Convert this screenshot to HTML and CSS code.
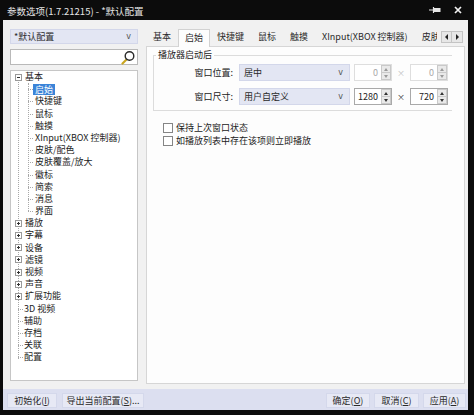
FILE: index.html
```html
<!DOCTYPE html>
<html lang="zh-CN">
<head>
<meta charset="utf-8">
<title>参数选项</title>
<link rel="stylesheet" href="styles.css">
</head>
<body>
<div class="window">
  <div class="titlebar">
    <span class="title">参数选项(1.7.21215) - *默认配置</span>
    <span class="tb-icons">
      <svg class="pin" width="12" height="8" viewBox="0 0 12 8"><path d="M0 4H4.5M4.5 1V7" stroke="#e6e6e6" stroke-width="1.2" fill="none"/><rect x="5" y="2" width="6.5" height="4" fill="#e6e6e6"/></svg>
      <svg class="close" width="8" height="8" viewBox="0 0 8 8"><path d="M1 1L7 7M7 1L1 7" stroke="#f0f0f0" stroke-width="1.7"/></svg>
    </span>
  </div>
  <div class="client">
    <div class="main">
      <div class="left">
        <div class="combo profile"><span>*默认配置</span><span class="arrow">v</span></div>
        <div class="search">
          <svg width="14" height="15" viewBox="0 0 14 15"><path d="M1.5 13.5L5 10" stroke="#c9a51f" stroke-width="2.2" stroke-linecap="round"/><circle cx="8.5" cy="6" r="4.3" stroke="#2a2a2a" stroke-width="1.4" fill="#fff"/></svg>
        </div>
        <div class="tree">
          <div class="row top"><span class="exp"><svg width="7" height="7" viewBox="0 0 7 7"><rect x="0.5" y="0.5" width="6" height="6" fill="#fff" stroke="#9a9a9a"/><path d="M2 3.5H5" stroke="#333"/></svg></span>基本</div>
          <div class="children">
            <div class="row child"><span class="sel">启始</span></div>
            <div class="row child">快捷键</div>
            <div class="row child">鼠标</div>
            <div class="row child">触摸</div>
            <div class="row child">XInput(XBOX 控制器)</div>
            <div class="row child">皮肤/配色</div>
            <div class="row child">皮肤覆盖/放大</div>
            <div class="row child">徽标</div>
            <div class="row child">简索</div>
            <div class="row child">消息</div>
            <div class="row child">界面</div>
          </div>
          <div class="row top"><span class="exp"><svg width="7" height="7" viewBox="0 0 7 7"><rect x="0.5" y="0.5" width="6" height="6" fill="#fff" stroke="#9a9a9a"/><path d="M2 3.5H5M3.5 2V5" stroke="#333"/></svg></span>播放</div>
          <div class="row top"><span class="exp"><svg width="7" height="7" viewBox="0 0 7 7"><rect x="0.5" y="0.5" width="6" height="6" fill="#fff" stroke="#9a9a9a"/><path d="M2 3.5H5M3.5 2V5" stroke="#333"/></svg></span>字幕</div>
          <div class="row top"><span class="exp"><svg width="7" height="7" viewBox="0 0 7 7"><rect x="0.5" y="0.5" width="6" height="6" fill="#fff" stroke="#9a9a9a"/><path d="M2 3.5H5M3.5 2V5" stroke="#333"/></svg></span>设备</div>
          <div class="row top"><span class="exp"><svg width="7" height="7" viewBox="0 0 7 7"><rect x="0.5" y="0.5" width="6" height="6" fill="#fff" stroke="#9a9a9a"/><path d="M2 3.5H5M3.5 2V5" stroke="#333"/></svg></span>滤镜</div>
          <div class="row top"><span class="exp"><svg width="7" height="7" viewBox="0 0 7 7"><rect x="0.5" y="0.5" width="6" height="6" fill="#fff" stroke="#9a9a9a"/><path d="M2 3.5H5M3.5 2V5" stroke="#333"/></svg></span>视频</div>
          <div class="row top"><span class="exp"><svg width="7" height="7" viewBox="0 0 7 7"><rect x="0.5" y="0.5" width="6" height="6" fill="#fff" stroke="#9a9a9a"/><path d="M2 3.5H5M3.5 2V5" stroke="#333"/></svg></span>声音</div>
          <div class="row top"><span class="exp"><svg width="7" height="7" viewBox="0 0 7 7"><rect x="0.5" y="0.5" width="6" height="6" fill="#fff" stroke="#9a9a9a"/><path d="M2 3.5H5M3.5 2V5" stroke="#333"/></svg></span>扩展功能</div>
          <div class="row leaf">3D 视频</div>
          <div class="row leaf">辅助</div>
          <div class="row leaf">存档</div>
          <div class="row leaf">关联</div>
          <div class="row leaf">配置</div>
        </div>
      </div>
      <div class="right">
        <div class="tabstrip">
          <div class="tabs">
            <span class="tab">基本</span>
            <span class="tab active">启始</span>
            <span class="tab">快捷键</span>
            <span class="tab">鼠标</span>
            <span class="tab">触摸</span>
            <span class="tab">XInput(XBOX 控制器)</span>
            <span class="tab">皮肤/配色</span>
          </div>
          <div class="tabscroll">
            <span class="sbtn"><i class="tri-l"></i></span><span class="sbtn"><i class="tri-r"></i></span>
          </div>
        </div>
        <div class="panel">
          <fieldset class="group">
            <legend>播放器启动后</legend>
            <div class="grid">
              <span class="lbl">窗口位置:</span>
              <div class="combo field"><span>居中</span><span class="arrow">v</span></div>
              <div class="spin disabled"><span class="val">0</span><span class="btns"><span><i class="up"></i></span><span><i class="down"></i></span></span></div>
              <span class="x disabled">×</span>
              <div class="spin disabled"><span class="val">0</span><span class="btns"><span><i class="up"></i></span><span><i class="down"></i></span></span></div>

              <span class="lbl">窗口尺寸:</span>
              <div class="combo field"><span>用户自定义</span><span class="arrow">v</span></div>
              <div class="spin"><span class="val">1280</span><span class="btns"><span><i class="up"></i></span><span><i class="down"></i></span></span></div>
              <span class="x">×</span>
              <div class="spin"><span class="val">720</span><span class="btns"><span><i class="up"></i></span><span><i class="down"></i></span></span></div>
            </div>
          </fieldset>
          <div class="checks">
            <div class="check"><span class="box"></span>保持上次窗口状态</div>
            <div class="check"><span class="box"></span>如播放列表中存在该项则立即播放</div>
          </div>
        </div>
      </div>
    </div>
    <div class="footer">
      <span class="btn w-init">初始化(<u>I</u>)</span>
      <span class="btn w-export">导出当前配置(<u>S</u>)...</span>
      <span class="spacer"></span>
      <span class="btn w-ok">确定(<u>O</u>)</span>
      <span class="btn w-cancel">取消(<u>C</u>)</span>
      <span class="btn w-apply">应用(<u>A</u>)</span>
    </div>
  </div>
</div>
</body>
</html>
```

FILE: styles.css
```css
* { box-sizing: border-box; }
html, body { margin: 0; padding: 0; background: #0c0c0c; }
body {
  font-family: "Noto Sans CJK SC", "Noto Sans", sans-serif;
  font-size: 9px;
  color: #1c1c1c;
}
.window {
  width: 474px;
  height: 415px;
  background: #0c0c0c;
  display: flex;
  flex-direction: column;
  overflow: hidden;
}
.titlebar {
  height: 20px;
  display: flex;
  align-items: center;
  padding-left: 7px;
  color: #e4e4e4;
  font-size: 9.5px;
}
.title { flex: 1; padding-top: 1px; }
.tb-icons { display: flex; align-items: center; gap: 13px; margin-right: 12px; }
.client {
  margin: 0 6px 0 3px;
  height: 390px;
  background: #f1f1f1;
  display: flex;
  flex-direction: column;
}
.main { height: 369px; display: flex; padding-top: 9px; }
.left {
  width: 128px;
  margin-left: 7px;
  margin-right: 8px;
  display: flex;
  flex-direction: column;
}
.combo {
  display: flex;
  align-items: center;
  background: #e3e6f3;
  border: 1px solid #d3d7ea;
  padding: 0 6px 0 3px;
  color: #2a2a2a;
}
.combo span:first-child { flex: 1; }
.combo .arrow { color: #555; font-size: 8px; font-family: "DejaVu Sans", sans-serif; }
.profile { height: 15px; }
.search {
  margin-top: 5px;
  height: 16px;
  background: #fff;
  border: 1px solid #b9b9b9;
  display: flex;
  justify-content: flex-end;
  align-items: center;
  padding-right: 2px;
}
.tree {
  margin-top: 5px;
  height: 311px;
  background: #fff;
  border: 1px solid #c6c6c6;
  position: relative;
}
.tree::before {
  content: "";
  position: absolute;
  left: 7px;
  top: 7px;
  height: 281px;
  border-left: 1px dotted #a8a8a8;
}
.row {
  height: 12.2px;
  line-height: 12.2px;
  display: flex;
  align-items: center;
  white-space: nowrap;
  position: relative;
}
.row.top { padding-left: 4px; }
.exp { width: 7px; height: 7px; margin-right: 3px; display: flex; position: relative; z-index: 1; }
.exp svg { display: block; }
.row.leaf { padding-left: 13px; }
.row.leaf::after, .row.child::after {
  content: "";
  position: absolute;
  top: 6px;
  width: 5px;
  border-top: 1px dotted #a8a8a8;
}
.row.leaf::after { left: 7px; }
.children { position: relative; }
.children::before {
  content: "";
  position: absolute;
  left: 17px;
  top: 0;
  bottom: 6px;
  border-left: 1px dotted #a8a8a8;
}
.row.child { padding-left: 24px; }
.row.child::after { left: 17px; }
.sel {
  background: #3b84d8;
  color: #fff;
  padding: 0 2px;
  margin-left: -2px;
  line-height: 11px;
  height: 11px;
}
.right { width: 319px; display: flex; flex-direction: column; }
.tabstrip { height: 17px; display: flex; align-items: flex-end; }
.tabs { flex: 1; display: flex; align-items: flex-end; overflow: hidden; white-space: nowrap; height: 18px; margin-bottom: -1px; }
.tab {
  padding: 0 7px;
  line-height: 15px;
  height: 15px;
  margin-bottom: 3px;
  color: #2a2a2a;
  flex: none;
}
.tab.active {
  background: #fdfdfd;
  border: 1px solid #d2d2d2;
  border-bottom: none;
  padding: 0 6px;
  height: 18px;
  line-height: 16px;
  margin-bottom: 0;
  position: relative;
  z-index: 1;
}
.tabscroll { display: flex; margin: 0 2px 3px 4px; }
.sbtn {
  width: 11px;
  height: 12px;
  background: #e7e7e7;
  border: 1px solid #c4c4c4;
  display: flex;
  align-items: center;
  justify-content: center;
}
.sbtn + .sbtn { border-left: none; }
.tri-l { border-right: 3px solid #222; border-top: 3px solid transparent; border-bottom: 3px solid transparent; }
.tri-r { border-left: 3px solid #222; border-top: 3px solid transparent; border-bottom: 3px solid transparent; }
.panel {
  height: 338px;
  background: #fdfdfd;
  border: 1px solid #d6d6d6;
  padding: 2px 0 0 6px;
}
.group {
  margin: 0 12px 0 0;
  padding: 3px 0 5px 0;
  border: 1px solid #dcdcdc;
  border-right: none;
  min-width: 0;
}
.group legend {
  padding: 0 2px;
  margin-left: 2px;
  line-height: 12px;
  color: #222;
}
.grid {
  display: grid;
  grid-template-columns: 85px 115px 38px 18px 38px;
  grid-auto-rows: 17px;
  row-gap: 7px;
  align-items: center;
}
.lbl { text-align: right; padding-right: 6px; color: #222; }
.field { width: 111px; height: 17px; padding-left: 4px; padding-right: 6px; }
.spin {
  height: 17px;
  display: flex;
  background: #fff;
  border: 1px solid #a9a9a9;
}
.spin .val { flex: 1; text-align: right; padding-right: 3px; line-height: 15px; color: #222; }
.spin .btns { width: 10px; display: flex; flex-direction: column; }
.spin .btns span {
  flex: 1;
  background: #e9e9e9;
  border: 1px solid #c9c9c9;
  display: flex;
  align-items: center;
  justify-content: center;
}
.spin .btns span + span { border-top: none; }
.up { border-bottom: 3px solid #333; border-left: 2.5px solid transparent; border-right: 2.5px solid transparent; }
.down { border-top: 3px solid #333; border-left: 2.5px solid transparent; border-right: 2.5px solid transparent; }
.spin.disabled { border-color: #dedede; }
.spin.disabled .val { color: #a8a8a8; }
.spin.disabled .up { border-bottom-color: #999; }
.spin.disabled .down { border-top-color: #999; }
.x { text-align: center; color: #333; font-size: 8px; }
.x.disabled { color: #c0c0c0; }
.checks { margin-top: 10px; padding-left: 10px; }
.check { height: 13px; display: flex; align-items: center; color: #222; }
.box {
  width: 10px;
  height: 10px;
  border: 1px solid #858585;
  background: #fff;
  margin-right: 3px;
}
.footer {
  height: 21px;
  background: #dcdff0;
  display: flex;
  align-items: flex-start;
  padding: 4px 2px 0 4px;
  gap: 5px;
}
.spacer { flex: 1; }
.btn {
  height: 15px;
  line-height: 13px;
  background: #e7e9f5;
  border: 1px solid #d4d8eb;
  text-align: center;
  color: #2a2a2a;
  white-space: nowrap;
}
.btn u { text-underline-offset: 1px; }
.w-init { width: 50px; }
.w-export { width: 82px; }
.w-ok { width: 44px; }
.w-cancel { width: 45px; margin-left: -1px; }
.w-apply { width: 43px; margin-left: -1px; }
```
